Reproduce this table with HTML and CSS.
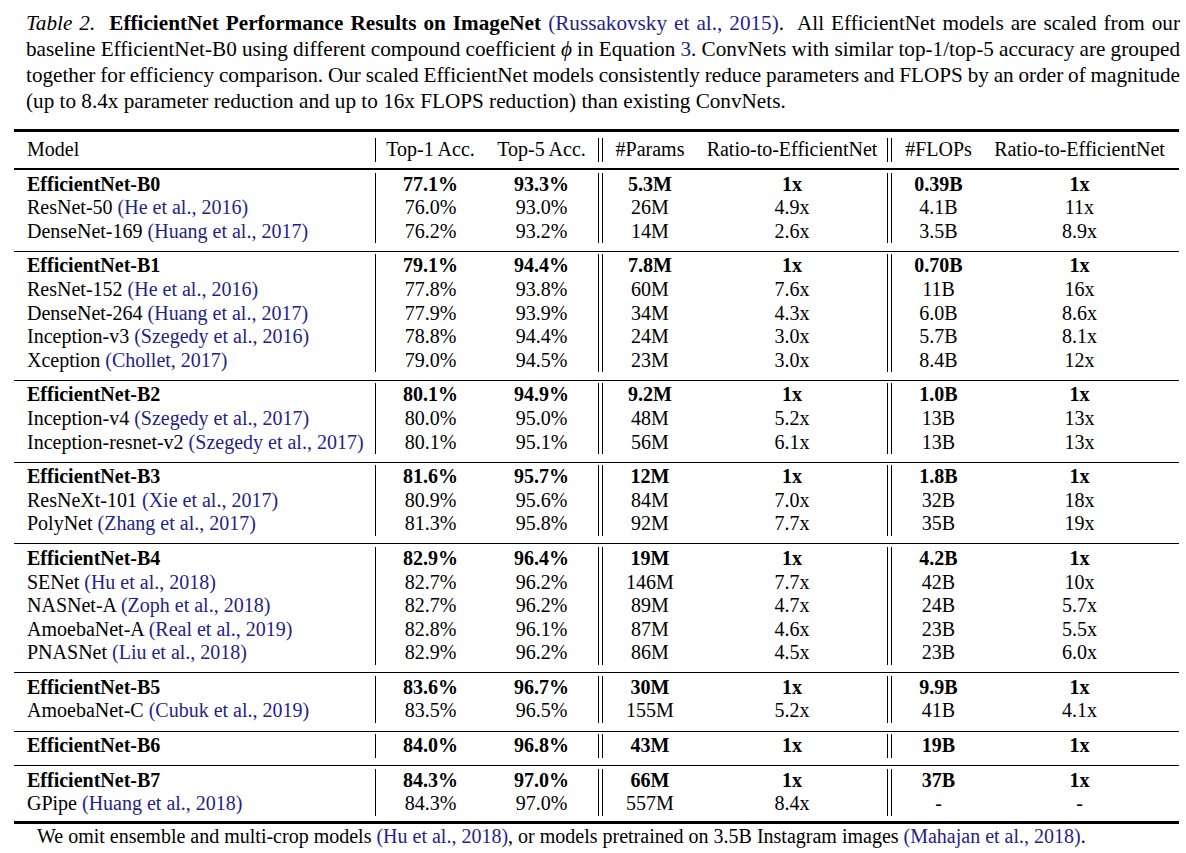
FILE: index.html
```html
<!DOCTYPE html>
<html lang="en">
<head>
<meta charset="utf-8">
<title>Table 2. EfficientNet Performance Results on ImageNet</title>
<link rel="stylesheet" href="styles.css">
</head>
<body>
<div class="page">
  <p class="caption">
    <span class="line"><i>Table 2.</i>&nbsp; <b>EfficientNet Performance Results on ImageNet</b> <span class="cite">(Russakovsky et al., 2015)</span>.&nbsp; All EfficientNet models are scaled from our</span>
    <span class="line">baseline EfficientNet-B0 using different compound coefficient <i class="phi">ϕ</i> in Equation <span class="cite">3</span>. ConvNets with similar top-1/top-5 accuracy are grouped</span>
    <span class="line">together for efficiency comparison. Our scaled EfficientNet models consistently reduce parameters and FLOPS by an order of magnitude</span>
    <span class="line last">(up to 8.4x parameter reduction and up to 16x FLOPS reduction) than existing ConvNets.</span>
  </p>

  <table class="results">
    <colgroup>
      <col class="c-model"><col class="c-top1"><col class="c-top5"><col class="c-params"><col class="c-ratio1"><col class="c-flops"><col class="c-ratio2">
    </colgroup>
    <tbody>
      <tr class="spacer top"><td colspan="7"></td></tr>
      <tr class="row head">
        <td class="model">Model</td><td class="v1">Top-1 Acc.</td><td>Top-5 Acc.</td><td class="dbl">#Params</td><td>Ratio-to-EfficientNet</td><td class="dbl">#FLOPs</td><td class="end">Ratio-to-EfficientNet</td>
      </tr>
      <tr class="sep head-sep"><td colspan="7"><div class="rule"></div></td></tr>

      <tr class="row ours"><td class="model">EfficientNet-B0</td><td class="v1">77.1%</td><td>93.3%</td><td class="dbl">5.3M</td><td>1x</td><td class="dbl">0.39B</td><td class="end">1x</td></tr>
      <tr class="row"><td class="model">ResNet-50 <span class="cite">(He et al., 2016)</span></td><td class="v1">76.0%</td><td>93.0%</td><td class="dbl">26M</td><td>4.9x</td><td class="dbl">4.1B</td><td class="end">11x</td></tr>
      <tr class="row"><td class="model">DenseNet-169 <span class="cite">(Huang et al., 2017)</span></td><td class="v1">76.2%</td><td>93.2%</td><td class="dbl">14M</td><td>2.6x</td><td class="dbl">3.5B</td><td class="end">8.9x</td></tr>
      <tr class="sep"><td colspan="7"><div class="rule"></div></td></tr>

      <tr class="row ours"><td class="model">EfficientNet-B1</td><td class="v1">79.1%</td><td>94.4%</td><td class="dbl">7.8M</td><td>1x</td><td class="dbl">0.70B</td><td class="end">1x</td></tr>
      <tr class="row"><td class="model">ResNet-152 <span class="cite">(He et al., 2016)</span></td><td class="v1">77.8%</td><td>93.8%</td><td class="dbl">60M</td><td>7.6x</td><td class="dbl">11B</td><td class="end">16x</td></tr>
      <tr class="row"><td class="model">DenseNet-264 <span class="cite">(Huang et al., 2017)</span></td><td class="v1">77.9%</td><td>93.9%</td><td class="dbl">34M</td><td>4.3x</td><td class="dbl">6.0B</td><td class="end">8.6x</td></tr>
      <tr class="row"><td class="model">Inception-v3 <span class="cite">(Szegedy et al., 2016)</span></td><td class="v1">78.8%</td><td>94.4%</td><td class="dbl">24M</td><td>3.0x</td><td class="dbl">5.7B</td><td class="end">8.1x</td></tr>
      <tr class="row"><td class="model">Xception <span class="cite">(Chollet, 2017)</span></td><td class="v1">79.0%</td><td>94.5%</td><td class="dbl">23M</td><td>3.0x</td><td class="dbl">8.4B</td><td class="end">12x</td></tr>
      <tr class="sep"><td colspan="7"><div class="rule"></div></td></tr>

      <tr class="row ours"><td class="model">EfficientNet-B2</td><td class="v1">80.1%</td><td>94.9%</td><td class="dbl">9.2M</td><td>1x</td><td class="dbl">1.0B</td><td class="end">1x</td></tr>
      <tr class="row"><td class="model">Inception-v4 <span class="cite">(Szegedy et al., 2017)</span></td><td class="v1">80.0%</td><td>95.0%</td><td class="dbl">48M</td><td>5.2x</td><td class="dbl">13B</td><td class="end">13x</td></tr>
      <tr class="row"><td class="model">Inception-resnet-v2 <span class="cite">(Szegedy et al., 2017)</span></td><td class="v1">80.1%</td><td>95.1%</td><td class="dbl">56M</td><td>6.1x</td><td class="dbl">13B</td><td class="end">13x</td></tr>
      <tr class="sep"><td colspan="7"><div class="rule"></div></td></tr>

      <tr class="row ours"><td class="model">EfficientNet-B3</td><td class="v1">81.6%</td><td>95.7%</td><td class="dbl">12M</td><td>1x</td><td class="dbl">1.8B</td><td class="end">1x</td></tr>
      <tr class="row"><td class="model">ResNeXt-101 <span class="cite">(Xie et al., 2017)</span></td><td class="v1">80.9%</td><td>95.6%</td><td class="dbl">84M</td><td>7.0x</td><td class="dbl">32B</td><td class="end">18x</td></tr>
      <tr class="row"><td class="model">PolyNet <span class="cite">(Zhang et al., 2017)</span></td><td class="v1">81.3%</td><td>95.8%</td><td class="dbl">92M</td><td>7.7x</td><td class="dbl">35B</td><td class="end">19x</td></tr>
      <tr class="sep"><td colspan="7"><div class="rule"></div></td></tr>

      <tr class="row ours"><td class="model">EfficientNet-B4</td><td class="v1">82.9%</td><td>96.4%</td><td class="dbl">19M</td><td>1x</td><td class="dbl">4.2B</td><td class="end">1x</td></tr>
      <tr class="row"><td class="model">SENet <span class="cite">(Hu et al., 2018)</span></td><td class="v1">82.7%</td><td>96.2%</td><td class="dbl">146M</td><td>7.7x</td><td class="dbl">42B</td><td class="end">10x</td></tr>
      <tr class="row"><td class="model">NASNet-A <span class="cite">(Zoph et al., 2018)</span></td><td class="v1">82.7%</td><td>96.2%</td><td class="dbl">89M</td><td>4.7x</td><td class="dbl">24B</td><td class="end">5.7x</td></tr>
      <tr class="row"><td class="model">AmoebaNet-A <span class="cite">(Real et al., 2019)</span></td><td class="v1">82.8%</td><td>96.1%</td><td class="dbl">87M</td><td>4.6x</td><td class="dbl">23B</td><td class="end">5.5x</td></tr>
      <tr class="row"><td class="model">PNASNet <span class="cite">(Liu et al., 2018)</span></td><td class="v1">82.9%</td><td>96.2%</td><td class="dbl">86M</td><td>4.5x</td><td class="dbl">23B</td><td class="end">6.0x</td></tr>
      <tr class="sep"><td colspan="7"><div class="rule"></div></td></tr>

      <tr class="row ours"><td class="model">EfficientNet-B5</td><td class="v1">83.6%</td><td>96.7%</td><td class="dbl">30M</td><td>1x</td><td class="dbl">9.9B</td><td class="end">1x</td></tr>
      <tr class="row"><td class="model">AmoebaNet-C <span class="cite">(Cubuk et al., 2019)</span></td><td class="v1">83.5%</td><td>96.5%</td><td class="dbl">155M</td><td>5.2x</td><td class="dbl">41B</td><td class="end">4.1x</td></tr>
      <tr class="sep"><td colspan="7"><div class="rule"></div></td></tr>

      <tr class="row ours"><td class="model">EfficientNet-B6</td><td class="v1">84.0%</td><td>96.8%</td><td class="dbl">43M</td><td>1x</td><td class="dbl">19B</td><td class="end">1x</td></tr>
      <tr class="sep"><td colspan="7"><div class="rule"></div></td></tr>

      <tr class="row ours"><td class="model">EfficientNet-B7</td><td class="v1">84.3%</td><td>97.0%</td><td class="dbl">66M</td><td>1x</td><td class="dbl">37B</td><td class="end">1x</td></tr>
      <tr class="row"><td class="model">GPipe <span class="cite">(Huang et al., 2018)</span></td><td class="v1">84.3%</td><td>97.0%</td><td class="dbl">557M</td><td>8.4x</td><td class="dbl">-</td><td class="end">-</td></tr>
      <tr class="spacer bottom"><td colspan="7"></td></tr>
    </tbody>
  </table>

  <p class="footnote">We omit ensemble and multi-crop models <span class="cite">(Hu et al., 2018)</span>, or models pretrained on 3.5B Instagram images <span class="cite">(Mahajan et al., 2018)</span>.</p>
</div>
</body>
</html>
```

FILE: styles.css
```css
html, body {
  margin: 0;
  padding: 0;
  background: #ffffff;
}

body {
  font-family: "Liberation Serif", "Times New Roman", serif;
  font-size: 20px;
  color: #000000;
}

.page {
  width: 1186px;
  padding-top: 10px;
}

.cite {
  color: #1f2388;
}

/* caption */
.caption {
  margin: 0 0 15px 26px;
  width: 1154px;
  font-size: 21.2px;
  line-height: 26px;
}

.caption .line {
  display: block;
  white-space: nowrap;
  word-spacing: -3px;
  text-align: justify;
  text-align-last: justify;
}

.caption .line.last {
  word-spacing: 0;
  text-align: left;
  text-align-last: left;
}

.caption b {
  font-weight: bold;
}

.phi {
  font-family: "Liberation Serif", "DejaVu Serif", serif;
  font-style: italic;
  font-weight: normal;
}

/* table */
.results {
  margin-left: 14px;
  width: 1165px;
  table-layout: fixed;
  border-collapse: separate;
  border-spacing: 0;
  border-top: 3px solid #000;
  border-bottom: 3px solid #000;
}

.c-model  { width: 361px; }
.c-top1   { width: 110px; }
.c-top5   { width: 113px; }
.c-params { width: 99px; }
.c-ratio1 { width: 190px; }
.c-flops  { width: 98px; }
.c-ratio2 { width: 194px; }

.results td {
  padding: 0;
  text-align: center;
  white-space: nowrap;
}

.results .row td {
  height: 23.6px;
  line-height: 23.6px;
}

.results .row td.model {
  text-align: left;
  padding-left: 13px;
}

.results .row td.end {
  padding-right: 5px;
}

.results .row.ours td {
  font-weight: bold;
}

.results .row td.v1 {
  border-left: 1px solid #000;
}

.results .row td.dbl {
  padding-left: 5px;
  background: linear-gradient(90deg, #000 0, #000 1px, transparent 1px, transparent 4px, #000 4px, #000 5px, transparent 5px) no-repeat;
}

.results .spacer.top td {
  height: 6px;
}

.results .spacer.bottom td {
  height: 5px;
}

.results .sep td {
  height: 11px;
}

.results .sep .rule {
  margin-top: 5px;
  height: 1px;
  background: #000;
}

.results .head-sep .rule {
  margin-top: 4px;
  height: 2px;
}

/* footnote */
.footnote {
  margin: 0 0 0 37px;
  line-height: 24px;
}
```
